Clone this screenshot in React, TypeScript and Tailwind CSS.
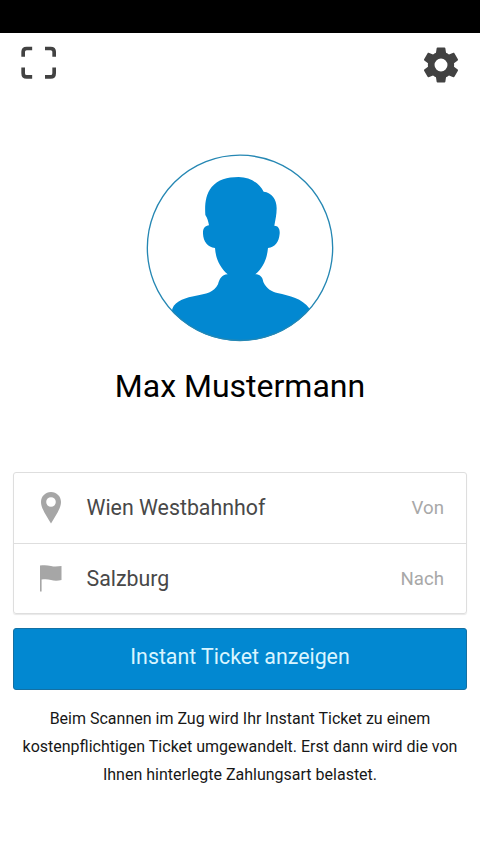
import React from "react";

function ScanIcon() {
  return (
    <svg width="35" height="33" viewBox="0 0 105 98" fill="none" stroke="#424242" strokeWidth="11">
      <path d="M33.500 7H17Q6.500 7 6.500 17V32" />
      <path d="M72 7H89Q99.500 7 99.500 17V32" />
      <path d="M6.500 64V81Q6.500 92 17 92H33.500" />
      <path d="M99.500 64V81Q99.500 92 89 92H72" />
    </svg>
  );
}

function GearIcon() {
  return (
    <svg width="42" height="42" viewBox="0 0 24 24" fill="#424242">
      <path d="M19.43 12.98c.04-.32.07-.64.07-.98s-.03-.66-.07-.98l2.110-1.650c.19-.15.24-.42.12-.64l-2-3.460c-.12-.22-.39-.3-.61-.22l-2.490 1c-.52-.4-1.080-.73-1.690-.98l-.38-2.650C14.460 2.180 14.250 2 14 2h-4c-.25 0-.46.18-.49.42l-.38 2.650c-.61.25-1.170.59-1.690.98l-2.490-1c-.23-.09-.49 0-.61.22l-2 3.460c-.13.22-.07.49.12.64l2.110 1.650c-.04.32-.07.65-.07.98s.03.66.07.98l-2.110 1.650c-.19.15-.24.42-.12.64l2 3.460c.12.22.39.3.61.22l2.490-1c.52.4 1.080.73 1.690.98l.38 2.650c.03.24.24.42.49.42h4c.25 0 .46-.18.49-.42l.38-2.650c.61-.25 1.170-.59 1.690-.98l2.490 1c.23.09.49 0 .61-.22l2-3.460c.12-.22.07-.49-.12-.64l-2.110-1.650zM12 15.700a3.700 3.700 0 1 1 0-7.400 3.700 3.700 0 0 1 0 7.400z" />
    </svg>
  );
}

function Avatar() {
  return (
    <svg width="200" height="200" viewBox="0 0 600 600">
      <defs>
        <clipPath id="disc">
          <circle cx="300" cy="309" r="279" />
        </clipPath>
      </defs>
      <path
        clipPath="url(#disc)"
        fill="#0288d1"
        d="M296 96C330 96 357 114 371 140C395 143 410 162 410 190C410 210 406 225 403 242C415 242 420 252 419 266C417 290 406 306 384 309C381 342 370 367 346 388C359 388 368 396 370 411C380 433 396 440 412 444C450 453 485 459 509 491L520 600H80L97 491C106 466 140 457 168 452C197 447 222 443 234 418C239 402 244 389 263 388C240 367 227 342 225 309C203 306 190 290 189 266C188 250 196 242 207 241C205 229 202 218 196 210C194 180 196 150 215 126C235 104 260 96 296 96Z"
      />
      <circle cx="300" cy="308.500" r="278" fill="none" stroke="#2587b3" strokeWidth="4" />
    </svg>
  );
}

function PinIcon() {
  return (
    <svg width="20" height="32" viewBox="0 0 20 32" fill="#a6a6a6">
      <path
        fillRule="evenodd"
        d="M10 0C4.400 0 0 4.400 0 10C0 17 7 26 10 31.500C13 26 20 17 20 10C20 4.400 15.600 0 10 0ZM10 5.200A4.800 4.800 0 1 1 10 14.800A4.800 4.800 0 1 1 10 5.200Z"
      />
    </svg>
  );
}

function FlagIcon() {
  return (
    <svg width="22" height="27" viewBox="0 0 22 27" fill="#a6a6a6">
      <path d="M0 .5C4 0 7 0 11 1C14 1.800 18 1.500 21.500 1V15C18 16 14 16 11 15C8 14 5 14 1.600 14.500V26.500H0Z" />
    </svg>
  );
}

interface StationProps {
  icon: React.ReactNode;
  name: string;
  label: string;
}

function StationRow({ icon, name, label }: StationProps) {
  return (
    <div className="flex items-center px-[22px]">
      <span className="flex w-[29px] justify-center">{icon}</span>
      <span className="ml-[21.500px] flex-1 text-[21.330px] leading-7 text-[#484848]">{name}</span>
      <span className="text-[18.670px] leading-7 text-[#a8a8a8]">{label}</span>
    </div>
  );
}

export default function App() {
  return (
    <div className="flex h-[853px] w-[480px] flex-col overflow-hidden bg-white font-['Roboto',sans-serif]">
      <div className="h-[33px] shrink-0 bg-black" />
      <header className="flex h-[112px] shrink-0 items-start justify-between pr-[18px] pl-[21px]">
        <button className="mt-[13px]" aria-label="Scannen">
          <ScanIcon />
        </button>
        <button className="mt-[11px]" aria-label="Einstellungen">
          <GearIcon />
        </button>
      </header>
      <div className="flex shrink-0 justify-center">
        <Avatar />
      </div>
      <h1 className="mt-[21px] text-center text-[32px] leading-10 whitespace-nowrap text-black">Max Mustermann</h1>
      <main className="mt-[66px] flex flex-col px-[13px]">
        <section className="grid grid-rows-[71px_69px] divide-y divide-[#dedede] rounded-[3px] border border-[#dedede] shadow-[0_1px_1px_#e8e8e8]">
          <StationRow icon={<PinIcon />} name="Wien Westbahnhof" label="Von" />
          <StationRow icon={<FlagIcon />} name="Salzburg" label="Nach" />
        </section>
        <button className="mt-[14px] h-[62px] rounded-[3px] border border-[#1470a3] bg-[#0288d1] pb-[4px] text-[21.330px] leading-7 text-[#d9f5ff]">
          Instant Ticket anzeigen
        </button>
        <p className="mt-[15px] text-center text-[16px] leading-7 whitespace-nowrap text-[#171717]">
          Beim Scannen im Zug wird Ihr Instant Ticket zu einem
          <br />
          kostenpflichtigen Ticket umgewandelt. Erst dann wird die von
          <br />
          Ihnen hinterlegte Zahlungsart belastet.
        </p>
      </main>
    </div>
  );
}
